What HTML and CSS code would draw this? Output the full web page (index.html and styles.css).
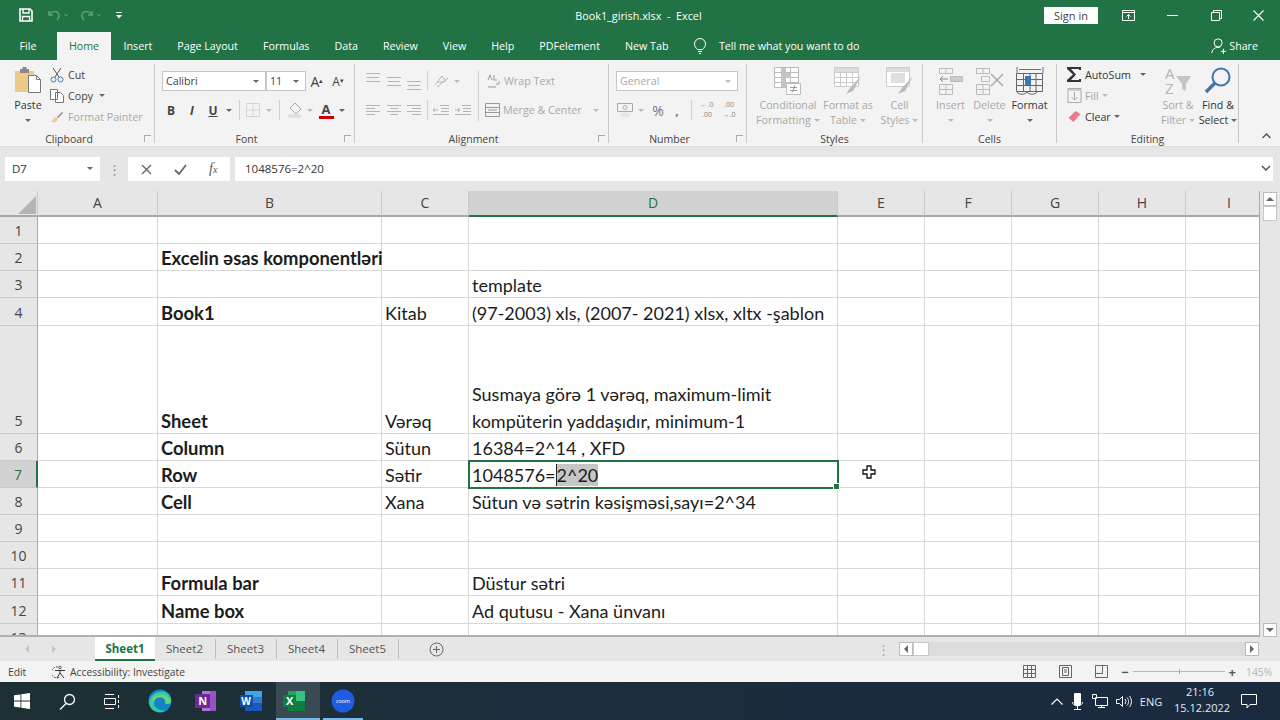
FILE: index.html
```html
<!DOCTYPE html>
<html lang="az">
<head>
<meta charset="utf-8">
<title>Book1_girish.xlsx - Excel</title>
<link rel="stylesheet" href="styles.css">
</head>
<body>
<div class="app">
  <header class="titlebar">
    <div class="qat">
      <span class="qb w27"><svg width="14" height="14" viewBox="0 0 14 14" fill="none" stroke="#fff" stroke-width="1.6"><path d="M1 1h10l2 2v10H1z"/><path d="M4 1v4h6V1M3.500 13V8.500h7V13" stroke-width="1.400"/></svg></span>
      <span class="qb w33"><svg width="24" height="14" viewBox="0 0 24 14" fill="none" stroke="#5f9f7f" stroke-width="1.500"><path d="M2 3v4h4M2 7c2-4 9-5 10 0 .4 2-1 4-2 5"/><path d="M17 6l2 2 2-2" stroke-width="1"/></svg></span>
      <span class="qb w33"><svg width="24" height="14" viewBox="0 0 24 14" fill="none" stroke="#5f9f7f" stroke-width="1.500"><path d="M12 3v4H8M12 7c-2-4-9-5-10 0-.4 2 1 4 2 5"/><path d="M17 6l2 2 2-2" stroke-width="1"/></svg></span>
      <span class="qb w29"><svg width="8" height="8" viewBox="0 0 8 8" fill="#fff"><path d="M1 1h6v1H1zM1 4h6L4 7.500z"/></svg></span>
    </div>
    <div class="doc-title">Book1_girish.xlsx &nbsp;-&nbsp; Excel</div>
    <button class="signin">Sign in</button>
    <span class="wb w1"><svg width="13" height="11" viewBox="0 0 13 11" fill="none" stroke="#fff"><path d="M.5.500h12v10H.5zM.5 2.500h12M6.500 9V4.500M4.500 6.500l2-2 2 2"/></svg></span>
    <span class="wb w2"><svg width="11" height="1" viewBox="0 0 11 1"><path d="M0 0h11v1H0z" fill="#fff"/></svg></span>
    <span class="wb w3"><svg width="11" height="11" viewBox="0 0 11 11" fill="none" stroke="#fff"><path d="M.5 2.500h8v8h-8zM2.500 2.500v-2h8v8h-2"/></svg></span>
    <span class="wb w4"><svg width="11" height="11" viewBox="0 0 11 11" stroke="#fff" stroke-width="1.100"><path d="M.5.500l10 10M10.500.500l-10 10"/></svg></span>
  </header>

  <nav class="tabs">
    <span class="tab file">File</span>
    <span class="tab home">Home</span>
    <span class="tab">Insert</span>
    <span class="tab">Page Layout</span>
    <span class="tab">Formulas</span>
    <span class="tab">Data</span>
    <span class="tab">Review</span>
    <span class="tab">View</span>
    <span class="tab">Help</span>
    <span class="tab">PDFelement</span>
    <span class="tab">New Tab</span>
    <span class="tell"><svg width="14" height="16" viewBox="0 0 14 16" fill="none" stroke="#fff"><path d="M4.500 11.500C3 10 1.500 8.500 1.500 6a5.500 5.500 0 0 1 11 0c0 2.500-1.500 4-3 5.500zM5 13.500h4M6 15.500h2"/></svg>Tell me what you want to do</span>
    <span class="share"><svg width="16" height="16" viewBox="0 0 18 18" fill="none" stroke="#fff" stroke-width="1.100"><circle cx="8" cy="5.500" r="4.500"/><path d="M1 17c0-3.500 3-6.500 7-6.500 1 0 2 .2 2.500.4M11 15h6M14 12v6"/></svg>Share</span>
  </nav>

  <section class="ribbon">
    <div class="group g-clip">
      <div class="gbody">
        <div class="big paste-btn">
          <span class="bigicon"><svg width="28" height="30" viewBox="0 0 28 30"><path d="M1 5h19v21H1z" fill="#eccb8a"/><path d="M6 3h9v4H6z" fill="#8a8a8a"/><path d="M8.500 1h4v3h-4z" fill="#8a8a8a"/><path d="M14.500 9.500h8l4 4v13h-12z" fill="#fff" stroke="#777"/><path d="M22.500 9.500v4h4" fill="none" stroke="#777"/></svg></span>
          <span>Paste</span><span class="caret dark"></span>
        </div>
        <div class="smallcol">
          <div class="sm"><svg width="14" height="16" viewBox="0 0 14 16" fill="none" stroke="#555"><path d="M3 1l6 9M11 1L5 10"/><circle cx="3.500" cy="12.500" r="2.500" stroke="#4a78ad"/><circle cx="10.500" cy="12.500" r="2.500" stroke="#4a78ad"/></svg>Cut</div>
          <div class="sm"><svg width="14" height="14" viewBox="0 0 14 14" fill="#fff" stroke="#777"><path d="M.5.500h7v10h-7zM5.500 3.500h5l3 3v7h-8z"/></svg>Copy <span class="caret dark ml"></span></div>
          <div class="sm off"><svg width="14" height="14" viewBox="0 0 14 14" fill="none"><path d="M7 7l5-5 1 1-5 5z" fill="#888"/><path d="M1 12c2-1 2-4 5-5l2 2c-1 3-4 4-7 3z" fill="#e6cf9e"/></svg>Format Painter</div>
        </div>
      </div>
      <div class="glabel launcher">Clipboard<i class="launch"></i></div>
    </div>

    <div class="group g-font">
      <div class="gbody rows">
        <div class="row">
          <span class="combo w103">Calibri<span class="caret dark"></span></span>
          <span class="combo w40">11<span class="caret dark"></span></span>
          <span class="tb w22 fa">A<sup>▴</sup></span>
          <span class="tb w20 fb">A<sup>▾</sup></span>
        </div>
        <div class="row">
          <span class="tb w18 bold">B</span>
          <span class="tb w24 ital">I</span>
          <span class="tb w18 und">U</span>
          <span class="tb w14"><span class="caret dark"></span></span>
          <span class="tb w6"><i class="vsep short"></i></span>
          <span class="tb w22"><svg width="14" height="14" viewBox="0 0 14 14" fill="none" stroke="#bbb" stroke-dasharray="1 1"><path d="M.5.500h13v13H.5zM.5 7h13M7 .500v13"/></svg></span>
          <span class="tb w10"><span class="caret"></span></span>
          <span class="tb w10"><i class="vsep short"></i></span>
          <span class="tb w22"><svg width="17" height="16" viewBox="0 0 17 16" fill="none" stroke="#aaa"><path d="M8 1l6 6-5 5-6-6z"/><path d="M1 14h13" stroke="#ddd" stroke-width="3"/></svg></span>
          <span class="tb w8"><span class="caret"></span></span>
          <span class="tb w24 fcolor">A</span>
          <span class="tb w8"><span class="caret dark"></span></span>
        </div>
      </div>
      <div class="glabel launcher">Font<i class="launch"></i></div>
    </div>

    <div class="group g-align">
      <div class="gbody rows">
        <div class="row">
          <span class="tb w22 up4"><svg class="lines" width="14" height="9" viewBox="0 0 14 9"><path d="M0 .500h14M1 4.500h12M0 8.500h14"/></svg></span>
          <span class="tb w20"><svg class="lines" width="14" height="9" viewBox="0 0 14 9"><path d="M0 .500h14M1 4.500h12M0 8.500h14"/></svg></span>
          <span class="tb w20 dn4"><svg class="lines" width="14" height="9" viewBox="0 0 14 9"><path d="M0 .500h14M1 4.500h12M0 8.500h14"/></svg></span>
          <span class="tb w6"><i class="vsep"></i></span>
          <span class="tb w22"><svg class="lines" width="16" height="14" viewBox="0 0 16 14"><path d="M2 11L9 2l4 6M4 8h7M4 13l11-9"/></svg></span>
          <span class="tb w10"><span class="caret"></span></span>
          <span class="tb w16"></span>
          <i class="vsep tall"></i>
          <span class="textbtn off ml8"><svg width="14" height="14" viewBox="0 0 14 14" fill="none" stroke="#999"><path d="M1 13h8M12 7v3H9"/><path d="M1 6l2-5 2 5M7 1v5h3" /></svg>Wrap Text</span>
        </div>
        <div class="row">
          <span class="tb w22"><svg class="lines" width="14" height="11" viewBox="0 0 14 11"><path d="M0 .500h14M0 3.500h9M0 6.500h14M0 9.500h9"/></svg></span>
          <span class="tb w20"><svg class="lines" width="14" height="11" viewBox="0 0 14 11"><path d="M0 .500h14M3 3.500h8M0 6.500h14M3 9.500h8"/></svg></span>
          <span class="tb w20"><svg class="lines" width="14" height="11" viewBox="0 0 14 11"><path d="M0 .500h14M5 3.500h9M0 6.500h14M5 9.500h9"/></svg></span>
          <span class="tb w6"><i class="vsep"></i></span>
          <span class="tb w22"><svg class="lines" width="16" height="11" viewBox="0 0 16 11"><path d="M7 .500h9M8 3.500h8M8 6.500h8M0 9.500h16M0 5h5M2 3L0 5l2 2"/></svg></span>
          <span class="tb w22"><svg class="lines" width="16" height="11" viewBox="0 0 16 11"><path d="M7 .500h9M8 3.500h8M8 6.500h8M0 9.500h16M0 5h5M3 3l2 2-2 2"/></svg></span>
          <span class="textbtn off ml11"><svg width="15" height="14" viewBox="0 0 15 14" fill="none" stroke="#999"><path d="M.5.500h14v13H.5zM.5 4.500h14M.5 9.500h14M3 7h9"/></svg>Merge &amp; Center<span class="caret ml8"></span></span>
        </div>
      </div>
      <div class="glabel launcher">Alignment<i class="launch"></i></div>
    </div>

    <div class="group g-num">
      <div class="gbody rows">
        <div class="row">
          <span class="combo w122 off">General<span class="caret"></span></span>
        </div>
        <div class="row">
          <span class="tb w18"><svg width="16" height="14" viewBox="0 0 16 14" fill="none" stroke="#aaa"><path d="M.5.500h15v8H.5z"/><circle cx="8" cy="4.500" r="2"/><path d="M4 11h9M4 13h9" stroke="#ddd"/></svg></span>
          <span class="tb w14"><span class="caret"></span></span>
          <span class="tb w20 sym">%</span>
          <span class="tb w18 sym b">,</span>
          <span class="tb w10"><i class="vsep short"></i></span>
          <span class="tb w22 dec">←.0<br>.00</span>
          <span class="tb w22 dec">.00<br>→.0</span>
        </div>
      </div>
      <div class="glabel launcher">Number<i class="launch"></i></div>
    </div>

    <div class="group g-styles">
      <div class="gbody">
        <div class="big off w64">
          <span class="bigicon"><svg width="28" height="30" viewBox="0 0 28 30" fill="#fff" stroke="#bbb"><path d="M.5 1.500h24v20H.5z"/><path d="M8.500 1.500v20M16.500 1.500v20M.5 6.500h24M.5 11.500h24M.5 16.500h24" fill="none"/><path d="M7 2h5v5h5v5h-5v9H7z" fill="#c4c4c4" stroke="none"/><path d="M12.500 17.500h14v11h-14z"/><path d="M16 21.500h7M16 24.500h7M21 19.500l-3 7" fill="none" stroke="#999"/></svg></span>
          <span>Conditional</span><span class="drop">Formatting<span class="caret"></span></span>
        </div>
        <div class="big off w56">
          <span class="bigicon"><svg width="28" height="30" viewBox="0 0 28 30" fill="#fff" stroke="#ccc"><path d="M.5 1.500h24v19H.5z"/><path d="M6.500 1.500v19M12.500 1.500v19M18.500 1.500v19M.5 6.500h24M.5 11.500h24M.5 16.500h24" fill="none"/><path d="M1 2h23v4H1z" fill="#ddd" stroke="none"/><path d="M27 10l-11 12-4 6 7-3z" fill="#bbb" stroke="none"/></svg></span>
          <span>Format as</span><span class="drop">Table<span class="caret"></span></span>
        </div>
        <div class="big off w38">
          <span class="bigicon"><svg width="28" height="30" viewBox="0 0 28 30" fill="#fff" stroke="#ccc"><path d="M.5 1.500h23v19H.5z"/><path d="M1 2h22v4H1z" fill="#ddd" stroke="none"/><path d="M5 7h14v10H5z" fill="#e2dedf" stroke="none"/><path d="M27 10l-11 12-4 6 7-3z" fill="#bbb" stroke="none"/></svg></span>
          <span>Cell</span><span class="drop">Styles<span class="caret"></span></span>
        </div>
      </div>
      <div class="glabel">Styles</div>
    </div>

    <div class="group g-cells">
      <div class="gbody">
        <div class="big off w39">
          <span class="bigicon"><svg width="26" height="28" viewBox="0 0 26 28" fill="none" stroke="#bbb"><path d="M1.500 1.500h13v5h-13zM8 1.500v5M1.500 17.500h13v10h-13zM1.500 22.500h13M8 17.500v10"/><path d="M12.500 9.500h12v5h-12z" fill="#ccc"/><path d="M2 12h8M5 9l-3 3 3 3" stroke="#888"/></svg></span>
          <span>Insert</span><span class="caret"></span>
        </div>
        <div class="big off w39">
          <span class="bigicon"><svg width="30" height="28" viewBox="0 0 30 28" fill="none" stroke="#bbb"><path d="M1.500 1.500h13v5h-13zM8 1.500v5M1.500 17.500h13v10h-13zM1.500 22.500h13M8 17.500v10M6.500 9.500h8v5h-8z"/><path d="M16 7l12 12M28 7L16 19" stroke="#aaa" stroke-width="1.500"/></svg></span>
          <span>Delete</span><span class="caret"></span>
        </div>
        <div class="big w41">
          <span class="bigicon"><svg width="28" height="30" viewBox="0 0 28 30" fill="none" stroke="#666"><path d="M1 1v6M27 1v6M3 3.500h22" stroke="#4a78ad"/><path d="M.5 7.500h26v18H.5zM7.500 7.500v18M14 7.500v18M20 7.500v18M.5 13.500h26M.5 19.500h26"/><path d="M9 10h6v9H9z" fill="#3f75b0" stroke="none"/><path d="M1 26c2 3 8 3 10 0M11 26c2 3 8 3 10 0"/></svg></span>
          <span>Format</span><span class="caret dark"></span>
        </div>
      </div>
      <div class="glabel">Cells</div>
    </div>

    <div class="group g-edit">
      <div class="gbody">
        <div class="smallcol editcol">
          <div class="sm dark"><svg width="15" height="15" viewBox="0 0 15 15"><path d="M0 0h14v3h-2V2H4l5 5.500L4 13h8v-1h2v3H0v-2l6-5.500L0 2z" fill="#333"/></svg>AutoSum<span class="caret dark ml9"></span></div>
          <div class="sm off"><svg width="15" height="15" viewBox="0 0 14 15" fill="none" stroke="#aaa"><path d="M.5.500h13v14H.5zM7 4v8M4 9l3 3 3-3"/><path d="M1 1h12v2H1z" fill="#ccc" stroke="none"/></svg>Fill<span class="caret ml2"></span></div>
          <div class="sm dark"><svg width="15" height="13" viewBox="0 0 14 13"><path d="M1 8l7-7 5 3-7 8z" fill="#e77b90"/></svg>Clear<span class="caret dark ml2"></span></div>
        </div>
        <div class="big off w40">
          <span class="bigicon"><svg class="vis" width="30" height="28" viewBox="0 0 30 28" fill="none"><text x="2" y="12" class="az">A</text><text x="2" y="27" class="az">Z</text><path d="M13 9h15l-5 8v7l-4-2v-5z" fill="#c4c4c4"/></svg></span>
          <span>Sort &amp;</span><span class="drop">Filter<span class="caret"></span></span>
        </div>
        <div class="big w40">
          <span class="bigicon"><svg width="28" height="30" viewBox="0 0 28 30" fill="none"><circle cx="17" cy="11" r="8.500" stroke="#3f75b0" stroke-width="2"/><path d="M11 17L2 26" stroke="#3f75b0" stroke-width="3.500"/></svg></span>
          <span>Find &amp;</span><span class="drop">Select<span class="caret dark"></span></span>
        </div>
      </div>
      <div class="glabel">Editing</div>
    </div>
    <div class="collapse"><svg width="9" height="6" viewBox="0 0 9 6" fill="none" stroke="#555" stroke-width="1.500"><path d="M.5 5l4-4 4 4"/></svg></div>
  </section>

  <div class="formula-wrap">
    <div class="formulabar">
      <div class="namebox">D7<span class="caret dark"></span></div>
      <div class="fdots">⋮</div>
      <div class="fbtns">
        <svg width="11" height="11" viewBox="0 0 11 11" stroke="#666" stroke-width="1.400"><path d="M1 1l9 9M10 1l-9 9"/></svg>
        <svg width="13" height="11" viewBox="0 0 13 11" fill="none" stroke="#666" stroke-width="1.800"><path d="M1 6l4 4 7-9"/></svg>
        <span class="fx">f<small>x</small></span>
      </div>
      <div class="finput">1048576=2^20<svg width="10" height="6" viewBox="0 0 10 6" fill="none" stroke="#555" stroke-width="1.500"><path d="M1 1l4 4 4-4"/></svg></div>
    </div>
  </div>

  <main class="sheet">
    <div class="grid">
      <div class="corner"><svg width="18" height="18" viewBox="0 0 18 18"><path d="M18 0v18H0z" fill="#b5b5b5"/></svg></div>
      <div class="ch">A</div><div class="ch">B</div><div class="ch">C</div><div class="ch act">D</div><div class="ch">E</div><div class="ch">F</div><div class="ch">G</div><div class="ch">H</div><div class="ch">I</div>

      <div class="rh">1</div><div class="c"></div><div class="c"></div><div class="c"></div><div class="c"></div><div class="c"></div><div class="c"></div><div class="c"></div><div class="c"></div><div class="c"></div>
      <div class="rh">2</div><div class="c"></div><div class="c b">Excelin əsas komponentləri</div><div class="c"></div><div class="c"></div><div class="c"></div><div class="c"></div><div class="c"></div><div class="c"></div><div class="c"></div>
      <div class="rh">3</div><div class="c"></div><div class="c"></div><div class="c"></div><div class="c">template</div><div class="c"></div><div class="c"></div><div class="c"></div><div class="c"></div><div class="c"></div>
      <div class="rh">4</div><div class="c"></div><div class="c b">Book1</div><div class="c">Kitab</div><div class="c">(97-2003) xls, (2007- 2021) xlsx, xltx -şablon</div><div class="c"></div><div class="c"></div><div class="c"></div><div class="c"></div><div class="c"></div>
      <div class="rh">5</div><div class="c"></div><div class="c b">Sheet</div><div class="c">Vərəq</div><div class="c wrap">Susmaya görə 1 vərəq, maximum-limit kompüterin yaddaşıdır, minimum-1</div><div class="c"></div><div class="c"></div><div class="c"></div><div class="c"></div><div class="c"></div>
      <div class="rh">6</div><div class="c"></div><div class="c b">Column</div><div class="c">Sütun</div><div class="c">16384=2^14 , XFD</div><div class="c"></div><div class="c"></div><div class="c"></div><div class="c"></div><div class="c"></div>
      <div class="rh act">7</div><div class="c"></div><div class="c b">Row</div><div class="c">Sətir</div><div class="c sel">1048576=<span class="hl">2^20</span></div><div class="c"></div><div class="c"></div><div class="c"></div><div class="c"></div><div class="c"></div>
      <div class="rh">8</div><div class="c"></div><div class="c b">Cell</div><div class="c">Xana</div><div class="c">Sütun və sətrin kəsişməsi,sayı=2^34</div><div class="c"></div><div class="c"></div><div class="c"></div><div class="c"></div><div class="c"></div>
      <div class="rh">9</div><div class="c"></div><div class="c"></div><div class="c"></div><div class="c"></div><div class="c"></div><div class="c"></div><div class="c"></div><div class="c"></div><div class="c"></div>
      <div class="rh">10</div><div class="c"></div><div class="c"></div><div class="c"></div><div class="c"></div><div class="c"></div><div class="c"></div><div class="c"></div><div class="c"></div><div class="c"></div>
      <div class="rh">11</div><div class="c"></div><div class="c b">Formula bar</div><div class="c"></div><div class="c">Düstur sətri</div><div class="c"></div><div class="c"></div><div class="c"></div><div class="c"></div><div class="c"></div>
      <div class="rh">12</div><div class="c"></div><div class="c b">Name box</div><div class="c"></div><div class="c">Ad qutusu - Xana ünvanı</div><div class="c"></div><div class="c"></div><div class="c"></div><div class="c"></div><div class="c"></div>
      <div class="rh">13</div><div class="c"></div><div class="c"></div><div class="c"></div><div class="c"></div><div class="c"></div><div class="c"></div><div class="c"></div><div class="c"></div><div class="c"></div>
      <svg class="cursor" width="14" height="14" viewBox="0 0 14 14"><path d="M5 1h4v4h4v4H9v4H5V9H1V5h4z" fill="#fff" stroke="#111" stroke-width="1.300"/></svg>
    </div>
    <div class="vscroll">
      <span class="sbtn"><i class="tri up"></i></span>
      <span class="sthumb"></span>
      <span class="vtrack"></span>
      <span class="sbtn"><i class="tri down"></i></span>
    </div>
  </main>

  <div class="sheettabs">
    <div class="navs"><i class="tri left pale"></i><i class="tri right pale"></i></div>
    <div class="st active">Sheet1</div>
    <div class="st">Sheet2</div>
    <div class="st">Sheet3</div>
    <div class="st">Sheet4</div>
    <div class="st">Sheet5</div>
    <div class="addsheet"><svg width="15" height="15" viewBox="0 0 15 15" fill="none" stroke="#666"><circle cx="7.500" cy="7.500" r="6.500"/><path d="M7.500 4v7M4 7.500h7"/></svg></div>
    <div class="hdots">⋮</div>
    <div class="hscroll">
      <span class="sbtn"><i class="tri left"></i></span>
      <span class="sthumb h"></span>
      <span class="htrack"></span>
      <span class="sbtn"><i class="tri right"></i></span>
    </div>
  </div>

  <footer class="status">
    <span class="mode">Edit</span>
    <span class="acc"><svg width="16" height="14" viewBox="0 0 16 14" fill="none" stroke="#555"><path d="M6 2a5.500 5.500 0 1 0 2 10" stroke-dasharray="2 1"/><circle cx="8" cy="2.500" r="1.300"/><path d="M3 5.500h10M8 5.500V8l-3 5M8 8l4 5" stroke="#333"/></svg>Accessibility: Investigate</span>
    <span class="views">
      <svg width="13" height="13" viewBox="0 0 13 13" fill="none" stroke="#666"><path d="M.5.500h12v12H.5zM4.500.500v12M8.500.500v12M.5 4.500h12M.5 8.500h12"/></svg>
      <svg width="13" height="13" viewBox="0 0 13 13" fill="none" stroke="#666"><path d="M.5.500h12v12H.5zM3.500 2.500h6v8h-6zM5 5h3M5 7h3"/></svg>
      <svg width="13" height="13" viewBox="0 0 13 13" fill="none" stroke="#666"><path d="M.5.500h12v12H.5zM.5 8.500h7v-8"/></svg>
    </span>
    <span class="zoom"><b>−</b><span class="slider"><i></i></span><b>+</b></span>
    <span class="pct">145%</span>
  </footer>

  <div class="taskbar">
    <span class="tk w44"><svg width="16" height="16" viewBox="0 0 16 16" fill="#fff"><path d="M0 2.300l6.500-.9v6.200H0zM7.300 1.300L16 0v7.600H7.300zM0 8.400h6.500v6.200L0 13.700zM7.300 8.400H16V16l-8.700-1.300z"/></svg></span>
    <span class="tk w46"><svg width="17" height="17" viewBox="0 0 17 17" fill="none" stroke="#fff" stroke-width="1.300"><circle cx="10.500" cy="6.500" r="5"/><path d="M7 10.500L1 16.500"/></svg></span>
    <span class="tk w44"><svg width="17" height="15" viewBox="0 0 17 15" fill="none" stroke="#fff"><path d="M1 .500h9M1 14.500h9M.5 4.500h11v6H.5zM14.500 1v3M14.500 6v3M14.500 11v3" /></svg></span>
    <span class="tk w52"><svg width="24" height="24" viewBox="0 0 24 24"><circle cx="12" cy="12" r="11.500" fill="#1283c7"/><path d="M1 13C3 3 15-1 21 6c3 4 3 9-1 9-3 0-3-1-3-3C17 8 8 6 6 13c-1 5 5 10 12 8-6 5-17 1-17-8z" fill="#39c9a0"/><path d="M6 13c2-7 11-5 11-1 0 2 0 3 3 3 1 0 2-.3 3-1.500C22 8 15 4 9 6 5 7 3 10 6 13z" fill="#8fdc5d" opacity=".6"/></svg></span>
    <span class="tk w40"><svg width="24" height="24" viewBox="0 0 24 24"><path d="M8 2h14v20H8z" fill="#b875d8"/><path d="M16 2h6v20h-6z" fill="#9a50c6"/><path d="M1 5h15v14H1z" fill="#6c2a96"/><text x="4.300" y="16" class="ic">N</text></svg></span>
    <span class="tk w50"><svg width="24" height="24" viewBox="0 0 24 24"><path d="M6 2h17v20H6z" fill="#2b7cd3"/><path d="M6 2h17v6H6z" fill="#41a5ee"/><path d="M6 14h17v8H6z" fill="#185abd"/><path d="M1 6h13v12H1z" fill="#124fa3"/><text x="2.300" y="16" class="ic sm9">W</text></svg></span>
    <span class="tk w44 on"><svg width="24" height="24" viewBox="0 0 24 24"><path d="M6 2h17v20H6z" fill="#21a366"/><path d="M6 12h17v10H6z" fill="#107c41"/><path d="M14 2h9v10h-9z" fill="#33c481"/><path d="M1 6h13v12H1z" fill="#107c41"/><text x="4" y="16" class="ic">X</text></svg></span>
    <span class="tk w40 under"><svg width="24" height="24" viewBox="0 0 24 24"><circle cx="12" cy="12" r="11.500" fill="#1f5de0"/><text x="12" y="14" class="zm">zoom</text></svg></span>
    <span class="tray">
      <svg width="12" height="7" viewBox="0 0 12 7" fill="none" stroke="#fff" stroke-width="1.200"><path d="M.5 6.500L6 1l5.500 5.500"/></svg>
      <svg class="t-mic" width="11" height="17" viewBox="0 0 11 17"><path d="M3 0h5a1 1 0 0 1 1 1v9a3 3 0 0 1-3 3H5a3 3 0 0 1-3-3V1a1 1 0 0 1 1-1z" fill="#fff"/><path d="M.5 9c0 5 10 5 10 0M5.500 13v3M2 16.500h7" stroke="#fff" fill="none"/></svg>
      <svg class="t-net" width="16" height="14" viewBox="0 0 16 14" fill="none" stroke="#fff"><path d="M3.500 3.500h12v8h-12zM9.500 11.500v2M6 13.500h7M.5.500h4v4h-4z"/></svg>
      <svg class="t-vol" width="16" height="13" viewBox="0 0 16 13" fill="none" stroke="#fff"><path d="M.5 4.500h3l3-3v10l-3-3h-3zM9 4c1 1 1 4 0 5M11 2.500c2 2 2 6 0 8M13.500 1c2.500 3 2.500 8 0 11"/></svg>
      <span class="lang">ENG</span>
      <span class="clock">21:16<br>15.12.2022</span>
      <svg class="note" width="16" height="15" viewBox="0 0 16 15" fill="none" stroke="#fff"><path d="M.5.500h15v10H9l-3 3.500v-3.500H.5z"/></svg>
    </span>
  </div>
</div>
</body>
</html>
```
FILE: styles.css
```css
* { box-sizing: border-box; }
html, body { margin: 0; height: 100%; overflow: hidden; }
body { font-family: "Open Sans", "Noto Sans", sans-serif; font-size: 10.7px; color: #444; }
svg { display: block; flex: none; }
svg.vis { overflow: visible; }
button { font: inherit; border: 0; padding: 0; }
.app { width: 1280px; height: 720px; display: flex; flex-direction: column; background: #e6e6e6; }

/* title bar */
.titlebar { height: 30px; background: #217346; color: #fff; display: flex; align-items: center; flex: none; }
.qat { display: flex; align-items: center; width: 133px; flex: none; padding-left: 10px; }
.qb { display: flex; justify-content: center; flex: none; }
.w27 { width: 32px; } .w33 { width: 33px; } .w29 { width: 22px; }
.doc-title { width: 1020px; flex: none; padding-right: 9px; text-align: center; font-size: 10.8px; white-space: nowrap; }
.signin { width: 54px; height: 17px; margin-left: -109px; background: #fff; color: #444; font-size: 11px; line-height: 17px; flex: none; }
.wb { display: flex; justify-content: center; width: 44px; flex: none; }
.w1 { margin-left: 8px; }
.w4 { width: 40px; }

/* tabs */
.tabs { height: 30px; background: #217346; color: #fff; display: flex; align-items: flex-end; flex: none; font-size: 10.7px; padding-left: 7px; }
.tab { height: 28px; line-height: 28px; padding: 0 12.500px; white-space: nowrap; }
.tab.file { width: 42px; padding: 0; text-align: center; margin-right: 8px; }
.tab.home { background: #f3f3f3; color: #217346; width: 54px; padding: 0; text-align: center; }
.tell { display: flex; align-items: center; gap: 12px; height: 28px; margin-left: 12px; white-space: nowrap; }
.share { display: flex; align-items: center; gap: 2px; height: 28px; margin-left: auto; margin-right: 22px; }

/* ribbon */
.ribbon { height: 86px; background: #f3f3f3; display: flex; flex: none; padding-top: 4px; }
.group { height: 79px; border-right: 1px solid #c9c9c9; flex: none; display: flex; flex-direction: column; }
.g-clip { width: 155px; } .g-font { width: 200px; } .g-align { width: 254px; } .g-num { width: 138px; }
.g-styles { width: 176px; } .g-cells { width: 134px; } .g-edit { width: 182px; }
.gbody { height: 68px; display: flex; flex: none; }
.glabel { height: 11px; line-height: 14px; text-align: center; position: relative; font-size: 10.500px; color: #444; }
.glabel.launcher { padding-right: 16px; }
.launch { position: absolute; right: 3px; top: 3px; width: 7px; height: 7px; border-left: 1px solid #aaa; border-top: 1px solid #aaa; }
.big { display: flex; flex-direction: column; align-items: center; line-height: 15px; white-space: nowrap; color: #333; flex: none; }
.bigicon { height: 34px; display: flex; align-items: center; justify-content: center; }
.big.off { color: #a8a8a8; }
.paste-btn { width: 48px; margin-left: 4px; }
.smallcol { display: flex; flex-direction: column; margin-left: -2px; }
.sm { height: 21px; display: flex; align-items: center; gap: 4px; white-space: nowrap; color: #444; }
.sm.off { color: #a8a8a8; }
.sm.dark { color: #333; }
.ml { margin-left: 2px; } .ml2 { margin-left: 0; } .ml9 { margin-left: 6px; }
.caret { display: inline-block; width: 0; height: 0; border-left: 3px solid transparent; border-right: 3px solid transparent; border-top: 3px solid #bbb; flex: none; }
.caret.dark { border-top-color: #666; }
.big > .caret { margin-top: 6px; }
.drop { display: flex; align-items: center; gap: 3px; }
.rows { flex-direction: column; padding-top: 7px; gap: 9px; }
.g-font .rows { padding-left: 7px; }
.g-align .rows { padding-left: 7px; }
.g-num .rows { padding-left: 7px; }
.row { display: flex; align-items: center; height: 20px; }
.combo { height: 20px; background: #fff; border: 1px solid #c6c6c6; display: flex; align-items: center; justify-content: space-between; padding: 0 6px 0 3px; flex: none; font-size: 10.7px; color: #444; }
.combo.off { color: #a8a8a8; }
.w103 { width: 104px; } .w40 { width: 40px; } .w122 { width: 122px; }
.tb { display: flex; align-items: center; justify-content: center; flex: none; height: 20px; color: #444; }
.w6 { width: 6px; } .w8 { width: 8px; } .w10 { width: 10px; } .w14 { width: 14px; } .w16 { width: 16px; } .w18 { width: 18px; } .w20 { width: 20px; } .w22 { width: 22px; } .w24 { width: 24px; }
.w38 { width: 47px; } .w39 { width: 39px; } .w41 { width: 41px; } .w40.big { width: 40px; } .w56 { width: 56px; } .w64 { width: 64px; }
.g-styles .gbody { padding-left: 9px; }
.g-cells .gbody { padding-left: 8px; }
.editcol { width: 93px; margin-left: 10px; }
.editcol .sm { gap: 3px; }
.fa { font-size: 14px; } .fb { font-size: 12px; }
.fa sup, .fb sup { font-size: 7px; line-height: 0; vertical-align: 8px; }
.bold { font-weight: 700; font-size: 12px; } .ital { font-style: italic; font-weight: 700; font-size: 12px; } .und { text-decoration: underline; font-weight: 700; font-size: 12px; }
.fcolor { font-weight: 700; font-size: 13px; border-bottom: 3px solid #c00; width: 15px; margin: 0 4.500px; height: 17px; line-height: 14px; }
.vsep { display: block; width: 1px; height: 20px; background: #d0d0d0; flex: none; }
.vsep.tall { height: 50px; align-self: flex-start; }
.lines { fill: none; stroke: #b5b5b5; }
.up4 { transform: translateY(-4px); } .dn4 { transform: translateY(4px); }
.textbtn { display: flex; align-items: center; gap: 3px; white-space: nowrap; color: #a8a8a8; }
.ml8 { margin-left: 8px; } .ml11 { margin-left: 11px; }
.sym { font-size: 14px; color: #777; } .sym.b { font-weight: 700; font-size: 12px; }
.dec { font-size: 7px; line-height: 10px; color: #888; text-align: center; display: block; height: auto; }
.az { font-size: 15px; fill: #b5b5b5; font-family: "Open Sans", sans-serif; }
.collapse { flex: 1; display: flex; align-items: flex-end; justify-content: flex-end; padding: 0 9px 4px 0; height: 79px; }

/* formula */
.formula-wrap { height: 45px; flex: none; padding-top: 11px; background: #e6e6e6; box-shadow: inset 0 1px 0 #dcdcdc; }
.formulabar { height: 24px; display: flex; align-items: stretch; padding-left: 5px; }
.namebox { width: 95px; background: #fff; display: flex; align-items: center; justify-content: space-between; padding: 0 7px 2px 7px; font-size: 11.500px; color: #333; flex: none; }
.fdots { width: 28px; text-align: center; color: #999; line-height: 24px; font-size: 13px; flex: none; }
.fbtns { width: 102px; background: #fff; display: flex; align-items: center; gap: 22px; padding-left: 13px; flex: none; }
.fx { font-family: "Liberation Serif", serif; font-style: italic; font-size: 14px; color: #555; }
.fx small { font-size: 10px; }
.finput { width: 1038px; margin-left: 5px; background: #fff; display: flex; align-items: center; justify-content: space-between; padding: 0 2px 2px 10px; font-size: 11.500px; color: #333; flex: none; }

/* sheet */
.sheet { height: 446px; flex: none; display: flex; }
.grid { width: 1260px; height: 446px; flex: none; overflow: hidden; display: grid; position: relative; grid-template-columns: 38px 120px 224px 87px 369px 87px 87px 87px 87px 87px; grid-template-rows: 26px repeat(4, 27.15px) 108px repeat(8, 27.15px); font-family: Lato, "Liberation Sans", sans-serif; font-size: 18px; color: #1c1c1c; border-right: 1px solid #aaa; border-bottom: 2px solid #b0b0b0; }
.corner { background: #e6e6e6; border-right: 1px solid #c9c9c9; border-bottom: 2px solid #a8a8a8; display: flex; justify-content: flex-end; align-items: flex-end; padding: 0 1px 1px 0; }
.ch { background: #e6e6e6; border-right: 1px solid #c9c9c9; border-bottom: 2px solid #a8a8a8; text-align: center; line-height: 24px; font-family: "Open Sans", sans-serif; font-size: 14px; color: #444; }
.ch.act { background: #d2d2d2; color: #217346; border-bottom-color: #217346; }
.rh { background: #e6e6e6; border-right: 1px solid #a8a8a8; border-bottom: 1px solid #c9c9c9; display: flex; align-items: flex-end; justify-content: center; line-height: 24px; font-family: "Open Sans", sans-serif; font-size: 14px; color: #444; }
.rh.act { background: #d2d2d2; color: #217346; border-right: 2px solid #217346; }
.c { background: #fff; border-right: 1px solid #d8d8d8; border-bottom: 1px solid #d8d8d8; padding: 0 3px; line-height: 24px; display: flex; align-items: flex-end; white-space: nowrap; }
.c.b { font-weight: 700; font-size: 18.4px; }
.c.wrap { white-space: normal; display: block; padding-top: 55px; line-height: 27px; }
.c.sel { outline: 2px solid #217346; outline-offset: -1px; position: relative; z-index: 1; }
.c.sel::after { content: ""; position: absolute; right: -3px; bottom: -3px; width: 5px; height: 5px; background: #217346; border: 1px solid #fff; }
.hl { background: #c6c6c6; border-left: 1px solid #222; height: 22px; line-height: 22px; margin-bottom: 1px; display: block; }
.cursor { position: absolute; left: 862px; top: 274px; z-index: 2; }
.vscroll { width: 20px; height: 446px; flex: none; display: flex; flex-direction: column; align-items: center; padding-top: 1px; }
.sbtn { width: 14px; height: 14px; background: #fff; border: 1px solid #bbb; display: flex; align-items: center; justify-content: center; flex: none; }
.sthumb { width: 14px; height: 15px; background: #fff; border: 1px solid #c8c8c8; flex: none; }
.sthumb.h { width: 16px; height: 14px; }
.vtrack { flex: 1; }
.tri { display: block; width: 0; height: 0; border: 4px solid transparent; flex: none; }
.tri.up { border-top: 0; border-bottom-color: #666; }
.tri.down { border-bottom: 0; border-top-color: #666; }
.tri.left { border-left: 0; border-right-color: #666; }
.tri.right { border-right: 0; border-left-color: #666; }
.tri.pale.left { border-right-color: #c4c4c4; }
.tri.pale.right { border-left-color: #c4c4c4; }

/* sheet tabs */
.sheettabs { height: 24px; flex: none; display: flex; align-items: flex-start; font-size: 11.500px; color: #555; }
.navs { width: 95px; height: 24px; display: flex; align-items: center; gap: 23px; padding-left: 25px; flex: none; }
.st { width: 61px; height: 20px; margin-top: 2px; padding-right: 1px; text-align: center; line-height: 20px; border-right: 1px solid #bdbdbd; flex: none; }
.st.active { height: 24px; width: 60px; margin-top: 0; padding-right: 0; line-height: 24px; background: #fff; color: #217346; font-weight: 700; border-right: 0; border-bottom: 2px solid #217346; }
.addsheet { margin-left: 30px; margin-top: 5px; flex: none; }
.hdots { width: 20px; margin-left: 429px; color: #aaa; line-height: 24px; text-align: center; font-size: 13px; flex: none; }
.hscroll { width: 360px; flex: none; margin-left: 6px; margin-top: 5px; display: flex; background: #dcdcdc; }
.htrack { flex: 1; }

/* status */
.status { height: 21px; background: #f3f3f3; flex: none; display: flex; align-items: center; font-size: 10.300px; color: #444; }
.mode { padding-left: 8px; width: 52px; flex: none; }
.acc { display: flex; align-items: center; gap: 2px; white-space: nowrap; flex: none; }
.views { display: flex; align-items: center; gap: 23px; margin-left: auto; flex: none; }
.zoom { display: flex; align-items: center; gap: 4px; margin-left: 13px; color: #555; font-size: 13px; flex: none; }
.slider { display: block; width: 92px; height: 1px; background: #bbb; position: relative; }
.slider i { position: absolute; left: 46px; top: -2px; width: 1px; height: 5px; background: #aaa; }
.pct { width: 26px; margin: 0 8px 0 10px; color: #b5b5b5; flex: none; }

/* taskbar */
.taskbar { height: 38px; flex: none; display: flex; align-items: center; background: linear-gradient(90deg, #1d3034, #1b2c3d 60%, #1a2a3f); color: #fff; }
.tk { height: 38px; display: flex; align-items: center; justify-content: center; flex: none; }
.w44 { width: 44px; } .w46 { width: 46px; } .w50 { width: 50px; } .w52 { width: 52px; }
.tk.w40 { width: 40px; }
.tk.on { background: #3a4a52; box-shadow: inset 0 -2px 0 #76b9ed; padding-right: 8px; margin-right: 3px; }
.tk.under { box-shadow: inset 0 -2px 0 #76b9ed; }
.ic { font: 700 11px "Open Sans", sans-serif; fill: #fff; }
.ic.sm9 { font-size: 10px; }
.zm { font: 5.500px "Open Sans", sans-serif; fill: #fff; text-anchor: middle; }
.tray { margin-left: auto; display: flex; align-items: center; padding-right: 23px; font-size: 11px; color: #e6ebef; }
.t-mic { margin-left: 9px; } .t-net { margin-left: 9px; } .t-vol { margin-left: 8px; }
.lang { margin-left: 7px; width: 24px; text-align: center; }
.clock { text-align: center; line-height: 16px; width: 52px; margin-left: 11px; padding-bottom: 2px; }
.note { margin-left: 15px; }
```
